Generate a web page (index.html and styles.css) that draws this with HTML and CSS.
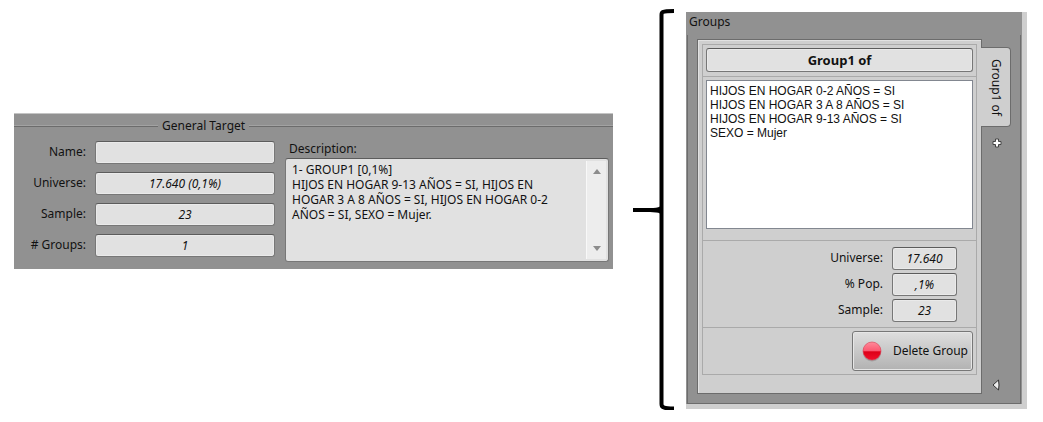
FILE: index.html
```html
<!DOCTYPE html>
<html lang="en">
<head>
    <meta charset="UTF-8">
    <title>General Target</title>
    <link rel="stylesheet" href="styles.css">
</head>
<body>
    <div class="page">
        <form class="target">
            <h2 class="target-title">General Target</h2>
            <div class="target-body">
                <div class="fields">
                    <label for="name">Name:</label>
                    <input type="text" id="name" value="">
                    <label for="universe">Universe:</label>
                    <input type="text" id="universe" value="17.640 (0,1%)" readonly>
                    <label for="sample">Sample:</label>
                    <input type="text" id="sample" value="23" readonly>
                    <label for="groups"># Groups:</label>
                    <input type="text" id="groups" value="1" readonly>
                </div>
                <div class="description">
                    <label for="description">Description:</label>
                    <div class="description-box">
                        <textarea id="description" readonly>1- GROUP1 [0,1%]
HIJOS EN HOGAR 9-13 AÑOS = SI, HIJOS EN HOGAR 3 A 8 AÑOS = SI, HIJOS EN HOGAR 0-2 AÑOS = SI, SEXO = Mujer.</textarea>
                        <div class="scrollbar">
                            <svg width="8" height="5" viewBox="0 0 8 5"><path d="M0 5L4 0L8 5Z" fill="#8c8c8c"/></svg>
                            <svg width="8" height="5" viewBox="0 0 8 5"><path d="M0 0H8L4 5Z" fill="#8c8c8c"/></svg>
                        </div>
                    </div>
                </div>
            </div>
        </form>

        <svg class="bracket" viewBox="0 0 42 401" preserveAspectRatio="none">
            <path d="M41 2Q32 2 30 3Q28.500 3.500 28.500 6V395Q28.500 398 31 398.500Q33 399.500 41 399.500" fill="none" stroke="#000" stroke-width="4"/>
            <path d="M0 199H17Q24 199 27 197.500H30V204.500H27Q24 203 17 203H0Z"/>
        </svg>

        <form class="groups">
            <h2 class="groups-title">Groups</h2>
            <div class="groups-frame">
                <div class="group">
                    <div class="group-cells">
                        <div class="cell cell-title">
                            <input type="text" class="group-name" aria-label="Group name" value="Group1 of">
                        </div>
                        <div class="cell cell-list">
                            <textarea class="conditions" aria-label="Conditions" readonly>HIJOS EN HOGAR 0-2 AÑOS = SI
HIJOS EN HOGAR 3 A 8 AÑOS = SI
HIJOS EN HOGAR 9-13 AÑOS = SI
SEXO = Mujer</textarea>
                        </div>
                        <div class="cell cell-stats">
                            <label for="g-universe">Universe:</label>
                            <input type="text" id="g-universe" value="17.640" readonly>
                            <label for="g-pop">% Pop.</label>
                            <input type="text" id="g-pop" value=",1%" readonly>
                            <label for="g-sample">Sample:</label>
                            <input type="text" id="g-sample" value="23" readonly>
                        </div>
                        <div class="cell cell-actions">
                            <button type="button" class="delete">
                                <svg width="22" height="22" viewBox="0 0 22 22">
                                    <defs>
                                        <linearGradient id="ball" x1="0" y1="0" x2="0" y2="1">
                                            <stop offset="0" stop-color="#ff8a9a"/>
                                            <stop offset=".5" stop-color="#fb5870"/>
                                            <stop offset=".54" stop-color="#dd0018"/>
                                            <stop offset="1" stop-color="#f0102c"/>
                                        </linearGradient>
                                    </defs>
                                    <ellipse cx="11" cy="13" rx="9" ry="8.500" fill="#888" opacity=".5"/>
                                    <circle cx="11" cy="11" r="9" fill="url(#ball)" stroke="#d83a50" stroke-width=".6"/>
                                </svg>
                                <span>Delete Group</span>
                            </button>
                        </div>
                    </div>
                </div>
                <div class="tabs">
                    <button type="button" class="tab">Group1 of</button>
                    <button type="button" class="icon-button" aria-label="Add group">
                        <svg width="10" height="10" viewBox="0 0 10 10"><path d="M3.500 1H6.500V3.500H9V6.500H6.500V9H3.500V6.500H1V3.500H3.500Z" fill="#fff" stroke="#444" stroke-linejoin="round"/></svg>
                    </button>
                    <button type="button" class="icon-button icon-last" aria-label="Previous">
                        <svg width="8" height="12" viewBox="0 0 8 12"><path d="M6.500 1L1 6L6.500 11Q7.500 6 6.500 1Z" fill="#eee" stroke="#333" stroke-linejoin="round"/></svg>
                    </button>
                </div>
            </div>
        </form>
    </div>
</body>
</html>
```

FILE: styles.css
```css
* { box-sizing: border-box; }
body { margin: 0; background: #fff; color: #111; font: 12px/16px "Noto Sans", "Open Sans", sans-serif; }
h2 { margin: 0; font-size: 12px; font-weight: normal; }
input, textarea, button { margin: 0; font: inherit; color: inherit; }
svg { display: block; }
label { padding-bottom: 2px; }
input { display: block; width: 100%; height: 23px; padding: 0 4px; background: #e1e1e1; border: 1px solid #777; border-top-color: #5c5c5c; border-radius: 3px; box-shadow: inset 0 0 0 1px #eaeaea; text-align: center; font-style: italic; }
textarea { display: block; resize: none; border: 0; outline: 0; overflow: hidden; }

.page { display: flex; align-items: flex-start; padding: 9px 16px 12px 14px; }

/* general target */
.target { flex: 1; min-width: 0; margin-top: 104px; padding-bottom: 7px; background: #919191; border-top: 1px solid #c4c4c4; }
.target-title { display: flex; align-items: center; gap: 4px; padding-top: 4px; }
.target-title::before, .target-title::after { content: ""; height: 2px; background: linear-gradient(#a2a2a2 50%, #6c6c6c 50%); }
.target-title::before { width: 144px; }
.target-title::after { flex: 1; }
.target-body { display: flex; gap: 10px; padding: 7px 4px 0 14px; }
.fields { display: grid; grid-template-columns: 58px 180px; column-gap: 9px; row-gap: 8px; align-content: start; align-items: center; text-align: right; white-space: nowrap; }
.description { flex: 1; display: flex; flex-direction: column; }
.description label { padding: 0 0 1px 4px; }
.description-box { flex: 1; display: flex; min-height: 104px; padding: 2px; background: #e1e1e1; border: 1px solid #777; border-top-color: #5c5c5c; border-radius: 3px; }
.description-box textarea { flex: 1; min-width: 0; padding: 1px 12px 1px 4px; background: transparent; line-height: 15px; }
.scrollbar { display: flex; flex-direction: column; justify-content: space-between; align-items: center; width: 20px; padding: 8px 0; background: #ededed; border-left: 1px solid #f8f8f8; }

.bracket { width: 42px; height: 401px; margin: 0 11px 0 20px; }

/* groups */
.groups { width: 341px; margin-top: 3px; background: #919191; border-right: 5px solid #cfcfcf; border-bottom: 5px solid #cfcfcf; }
.groups-title { height: 23px; padding: 2px 3px; }
.groups-frame { display: flex; margin: 0 1px; padding: 4px 0 9px 9px; border: solid #6c6c6c; border-width: 0 1px 1px; }
.group { flex: 1; padding: 4px 4px 18px; background: #cfcfcf; border: 1px solid #6c6c6c; box-shadow: inset 1px 1px #e2e2e2; }
.group-cells { border: 1px solid #aaa; }
.cell { padding: 3px; }
.cell + .cell { border-top: 1px solid #aaa; }
.group-name { height: 24px; font-size: 13px; font-style: normal; font-weight: bold; }
.cell-title { height: 31px; }
.conditions { width: 100%; height: 149px; padding: 3px; background: #fff; border: 1px solid #828790; font: 12px/14px "Liberation Sans", Arial, sans-serif; }
.cell-list { height: 164px; }
.cell-stats { display: grid; grid-template-columns: 1fr 65px; gap: 3px 9px; align-items: center; padding: 6px 19px 5px; text-align: right; }
.cell-actions { display: flex; justify-content: flex-end; }
.delete { display: flex; align-items: center; justify-content: space-between; width: 121px; height: 40px; padding: 0 4px 0 8px; background: linear-gradient(#dedede, #b2b2b2); border: 1px solid #777; border-radius: 3px; box-shadow: inset 0 0 0 1px #e6e6e6; white-space: nowrap; }

.tabs { display: flex; flex-direction: column; align-items: flex-start; width: 38px; padding-top: 8px; }
.tab { width: 30px; height: 80px; margin-left: -1px; padding: 0; background: #cfcfcf; border: 1px solid #6c6c6c; border-left: 0; border-radius: 0 4px 4px 0; writing-mode: vertical-rl; line-height: 26px; }
.icon-button { margin: 11px 0 0 10px; padding: 0; background: none; border: 0; }
.icon-last { margin-top: auto; margin-bottom: 3px; }
```
